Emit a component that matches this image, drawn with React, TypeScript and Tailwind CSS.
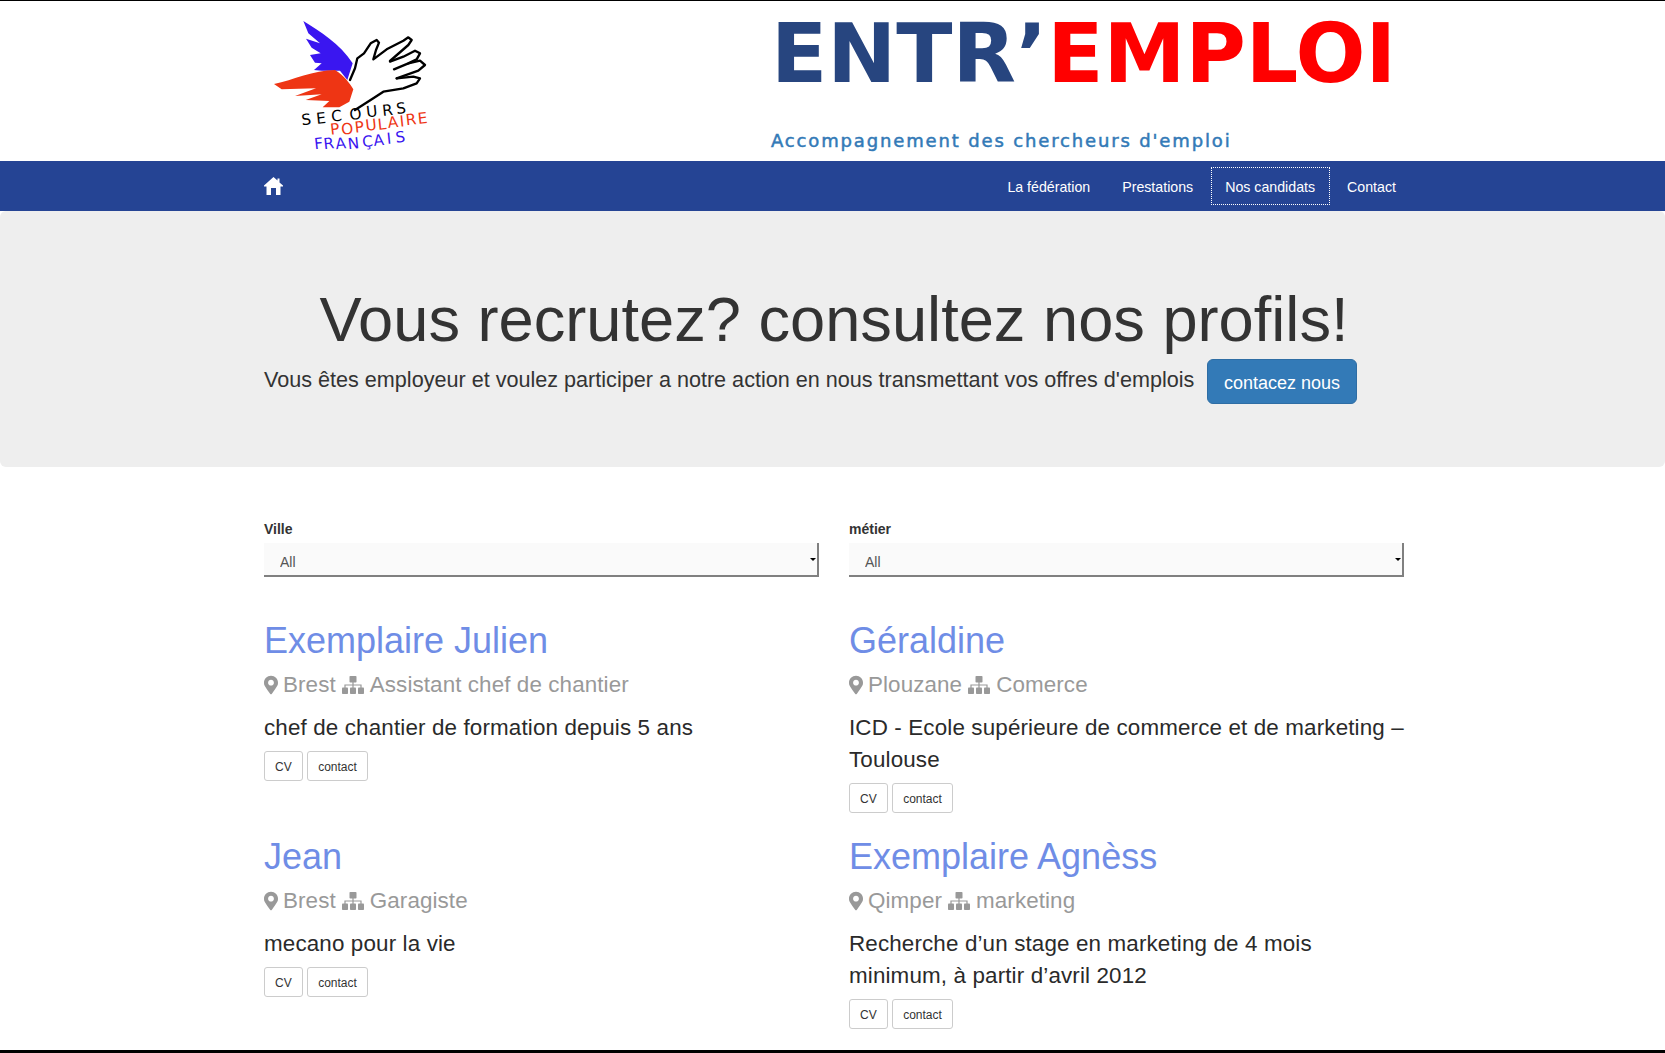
import { FaMapMarkerAlt } from "react-icons/fa";

const sans = "font-['Liberation_Sans',Arial,sans-serif]";

const candidates = [
  { name: "Exemplaire Julien", city: "Brest", job: "Assistant chef de chantier", text: "chef de chantier de formation depuis 5 ans" },
  { name: "Géraldine", city: "Plouzane", job: "Comerce", text: "ICD - Ecole supérieure de commerce et de marketing – Toulouse" },
  { name: "Jean", city: "Brest", job: "Garagiste", text: "mecano pour la vie" },
  { name: "Exemplaire Agnèss", city: "Qimper", job: "marketing", text: "Recherche d’un stage en marketing de 4 mois minimum, à partir d’avril 2012" },
];

function Logo() {
  return (
    <svg viewBox="27 3 633 480" className="w-[211px] h-[160px] shrink-0">
      <path fill="#3a16f0" d="M190 63 C240 95 300 130 338 190 L322 240 L300 212 L245 212 L222 210 L245 190 L225 188 L210 165 L242 160 L215 143 L198 116 L240 130 L205 100 Z" />
      <path fill="#ee3514" d="M102 252 C160 240 220 210 285 210 C310 225 330 250 340 268 L328 305 L298 322 L248 322 L268 303 L197 300 L245 283 L165 288 L228 265 L125 268 Z" />
      <g fill="none" stroke="#000" strokeWidth="7" strokeLinecap="round" strokeLinejoin="round">
        <path d="M330 240 L345 205 L352 175 L372 160 L392 130 L410 120 L417 128 L408 150 L400 178 L440 148 L490 122 L505 112 L515 120 L505 135 L450 183" />
        <path d="M450 185 L490 170 L525 152 L540 160 L530 178 L505 190 L462 208" />
        <path d="M505 190 L540 182 L555 195 L535 212 L470 235" />
        <path d="M470 235 L520 230 L540 235 L530 250 L490 265 L430 275 L400 295 L345 330" />
      </g>
      <g className="font-['DejaVu_Sans',sans-serif]" fontSize="46">
        <text fill="#000" x="186 230 275 330 380 428 470" y="376 372 365 360 352 348 342" rotate="-6">SECOURS</text>
        <text fill="#ee3514" x="272 305 346 378 415 445 481 499 535" y="404 404 398 392 390 384 380 376 372" rotate="-6">POPULAIRE</text>
        <text fill="#3a16f0" x="224 252 288 325 368 402 442 468" y="448 448 448 448 442 438 432 428" rotate="-6">FRANÇAIS</text>
      </g>
    </svg>
  );
}

function HomeIcon() {
  return (
    <svg viewBox="0 0 19 18" className="w-[19px] h-[18px] fill-white">
      <path d="M9.5 0 L13.5 3.6 V1.5 H15.5 V5.4 L19 8.6 V9.5 H16.5 V18 H12 V11 H7 V18 H2.5 V9.5 H0 V8.6 Z" />
    </svg>
  );
}

function SitemapIcon() {
  return (
    <svg viewBox="0 0 22 18" className="w-[22px] h-[18px] shrink-0 fill-current">
      <rect x="7.5" y="0" width="7" height="6.5" rx="0.8" />
      <rect x="0" y="11.5" width="6" height="6.5" rx="0.8" />
      <rect x="8" y="11.5" width="6" height="6.5" rx="0.8" />
      <rect x="16" y="11.5" width="6" height="6.5" rx="0.8" />
      <path d="M10.4 6 H11.6 V8.4 H19.6 V12 H18.4 V9.6 H11.6 V12 H10.4 V9.6 H3.6 V12 H2.4 V8.4 H10.4 Z" />
    </svg>
  );
}

function Filter({ label }: { label: string }) {
  return (
    <div>
      <label className="block text-[14px] leading-[20px] font-bold text-[#333] mb-[4px]">{label}</label>
      <div className="relative">
        <select className="block w-full h-[34px] appearance-none bg-[#fafafa] border-b-2 border-r-2 border-[#808080] pl-[16px] pt-[7px] text-[14px] text-[#555] rounded-none outline-none">
          <option>All</option>
        </select>
        <span className="absolute right-[3px] top-[15px] border-x-[3px] border-t-[3px] border-x-transparent border-t-black" />
      </div>
    </div>
  );
}

function Candidate({ name, city, job, text }: (typeof candidates)[number]) {
  return (
    <article>
      <h2 className="pt-[1px] text-[36px] leading-[40px] text-[#6f8de6] font-normal">{name}</h2>
      <p className="mt-[8px] flex items-center gap-[6px] text-[22.4px] leading-[32px] tracking-[0.1px] text-[#999]">
        <FaMapMarkerAlt className="w-[14px] h-[20px] -mr-[1px]" />
        <span>{city}</span>
        <SitemapIcon />
        <span>{job}</span>
      </p>
      <p className="mt-[11px] -mr-[3px] text-[22.4px] leading-[32px] tracking-[0.14px] text-[#2a2a2a]">{text}</p>
      <div className="mt-[7px] flex gap-[4px]">
        <button className="h-[30px] px-[10px] pt-[1px] border border-[#ccc] rounded-[3px] bg-white text-[12px] text-[#333]">CV</button>
        <button className="h-[30px] px-[10.5px] pt-[1px] border border-[#ccc] rounded-[3px] bg-white text-[12px] text-[#333]">contact</button>
      </div>
    </article>
  );
}

export default function App() {
  return (
    <div className={`${sans} h-screen overflow-hidden bg-white border-t border-black border-b-[3px] text-[#333]`}>
      <header className="ml-[249px] w-[1170px] h-[160px] flex">
        <div className="w-[522px]">
          <Logo />
        </div>
        <div className="pt-[5px]">
          <div className="font-['DejaVu_Sans',sans-serif] font-bold text-[82.4px] leading-[96px] whitespace-nowrap">
            <span className="text-[#27457f]">ENTR’</span>
            <span className="text-[#ff0000]">EMPLOI</span>
          </div>
          <div className="mt-[27px] font-['DejaVu_Sans',sans-serif] text-[18px] leading-[24px] tracking-[1.85px] [-webkit-text-stroke:0.5px_#337ab7] text-[#337ab7] whitespace-nowrap">
            Accompagnement des chercheurs d'emploi
          </div>
        </div>
      </header>

      <nav className="h-[50px] bg-[#254494]">
        <div className="ml-[249px] w-[1170px] h-full flex items-center pl-[15px] pr-[7px]">
          <HomeIcon />
          <ul className="ml-auto flex text-[14.2px] text-white">
            {["La fédération", "Prestations", "Nos candidats", "Contact"].map((item) => (
              <li key={item} className={`mx-[1.5px] h-[38px] flex items-center px-[13.5px] pt-[3px] border ${item === "Nos candidats" ? "border-dotted border-white" : "border-transparent"}`}>
                {item}
              </li>
            ))}
          </ul>
        </div>
      </nav>

      <section className="h-[256px] bg-[#eeeeee] rounded-[6px]">
        <div className="ml-[249px] w-[1170px] px-[15px] pt-[74px]">
          <h1 className="text-[63.2px] leading-[69px] text-center text-[#333] font-normal">Vous recrutez? consultez nos profils!</h1>
          <div className="mt-[4px] flex items-center gap-[12.5px]">
            <p className="pb-[2px] text-[21.6px] leading-[30px] text-[#333]">Vous êtes employeur et voulez participer a notre action en nous transmettant vos offres d'emplois</p>
            <a className="h-[45px] mt-[1px] flex items-center px-[16px] pt-[4px] rounded-[6px] bg-[#337ab7] border border-[#2e6da4] text-[18px] text-white">contacez nous</a>
          </div>
        </div>
      </section>

      <main className="ml-[249px] w-[1170px] px-[15px] pt-[52px]">
        <div className="grid grid-cols-2 gap-x-[30px]">
          <Filter label="Ville" />
          <Filter label="métier" />
        </div>
        <div className="mt-[43px] grid grid-cols-2 gap-x-[30px] gap-y-[23px]">
          {candidates.map((c) => (
            <Candidate key={c.name} {...c} />
          ))}
        </div>
      </main>
    </div>
  );
}
